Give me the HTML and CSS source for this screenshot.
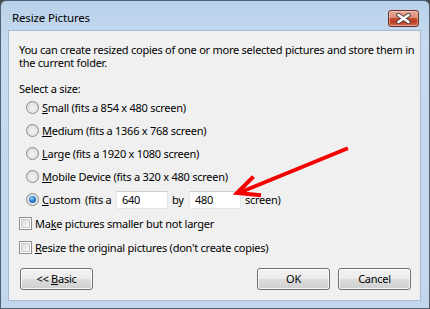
FILE: index.html
```html
<!DOCTYPE html>
<html>
<head>
<meta charset="utf-8">
<link rel="stylesheet" href="styles.css">
</head>
<body>
<div class="window">
  <div class="titlebar">
    <span class="title">Resize Pictures</span>
    <div class="close">
      <svg width="15" height="11" viewBox="0 0 15 11">
        <path d="M2.5 2 L12.5 9 M12.5 2 L2.5 9" stroke="#4e3a37" stroke-width="4.4" stroke-linecap="round" fill="none"/>
        <path d="M2.5 2 L12.5 9 M12.5 2 L2.5 9" stroke="#ffffff" stroke-width="2.6" stroke-linecap="round" fill="none"/>
      </svg>
    </div>
  </div>
  <div class="client">
    <p class="intro">You can create resized copies of one or more selected pictures and store them in</p>
    <p class="intro">the current folder.</p>
    <p class="section">Select a size:</p>
    <div class="radios">
      <div class="row"><span class="radio"></span><span><u>S</u>mall (fits a 854 x 480 screen)</span></div>
      <div class="row"><span class="radio"></span><span><u>M</u>edium (fits a 1366 x 768 screen)</span></div>
      <div class="row"><span class="radio"></span><span><u>L</u>arge (fits a 1920 x 1080 screen)</span></div>
      <div class="row"><span class="radio"></span><span><u>M</u>obile Device (fits a 320 x 480 screen)</span></div>
      <div class="row"><span class="radio checked"></span><span class="custom-label"><u>C</u>ustom</span><span class="fits">(fits a</span><span class="field">640</span><span class="by">by</span><span class="field">480</span><span class="screen">screen)</span></div>
    </div>
    <div class="checks">
      <div class="crow"><span class="check"></span><span>Ma<u>k</u>e pictures smaller but not larger</span></div>
      <div class="crow"><span class="check"></span><span><u>R</u>esize the original pictures (don't create copies)</span></div>
    </div>
    <div class="buttons">
      <div class="btn"><span>&lt;&lt; <u>B</u>asic</span></div>
      <div class="right">
        <div class="btn"><span>OK</span></div>
        <div class="btn"><span>Cancel</span></div>
      </div>
    </div>
  </div>
  <svg class="arrow" width="430" height="309" viewBox="0 0 430 309">
    <g stroke="#f40000" stroke-width="4" fill="none" stroke-linecap="square" stroke-linejoin="miter">
      <path d="M346 149 L241 192"/>
      <path d="M252 178 L237 193 L259 195"/>
    </g>
  </svg>
</div>
</body>
</html>
```
FILE: styles.css
```css
* { box-sizing: border-box; }
html, body { margin: 0; padding: 0; }
body {
  background: #4a4a4a;
  font-family: "Noto Sans", "Open Sans", sans-serif;
  font-size: 11px;
  color: #000;
}
.window {
  position: relative;
  width: 430px;
  height: 309px;
  border: 1px solid #54606e;
  border-radius: 6px 6px 0 0;
  background: linear-gradient(#b9d1ea 0px, #c6daf0 40px, #c2d7ee 100%);
  display: flex;
  flex-direction: column;
  overflow: hidden;
}
.titlebar {
  height: 29px;
  flex: none;
  display: flex;
  align-items: flex-start;
  justify-content: space-between;
  padding: 0 10px 0 11px;
}
.title {
  margin-top: 9px;
  line-height: 16px;
  font-size: 11.5px;
  letter-spacing: -0.15px;
}
.close {
  margin-top: 9px;
  width: 31px;
  height: 17px;
  border: 1px solid #6e3126;
  border-radius: 3px;
  background: linear-gradient(#e9a99b 0%, #d98a76 45%, #c24a2e 50%, #c13e22 75%, #d4765a 100%);
  box-shadow: inset 0 0 0 1px rgba(255,255,255,0.35);
  display: flex;
  align-items: center;
  justify-content: center;
}
.client {
  margin-left: 7px;
  width: 413px;
  height: 271px;
  flex: none;
  background: #f0f0f0;
  border: 1px solid #a6b9d0;
  padding: 12px 9px 0 10px;
  letter-spacing: -0.25px;
}
p { margin: 0; white-space: nowrap; }
.intro { line-height: 13px; height: 13px; }
.section { margin-top: 13px; line-height: 13px; }
.radios { margin-top: 1px; }
.row {
  height: 23px;
  display: flex;
  align-items: center;
  padding-left: 7px;
  white-space: nowrap;
}
.radio {
  width: 13px;
  height: 13px;
  border-radius: 50%;
  border: 1px solid #8a8a8a;
  background: radial-gradient(circle at 50% 60%, #f4f4f4 0%, #e4e4e4 55%, #d2d2d2 100%);
  margin-right: 3px;
  flex: none;
  display: flex;
  align-items: center;
  justify-content: center;
}
.radio.checked::after {
  content: "";
  width: 7px;
  height: 7px;
  border-radius: 50%;
  background: radial-gradient(circle at 40% 35%, #9fd6f7 0%, #2d80cf 45%, #0d3f82 100%);
}
.custom-label { width: 43px; flex: none; }
.fits { width: 31px; flex: none; }
.field {
  width: 52px;
  height: 18px;
  flex: none;
  background: #fff;
  border: 1px solid #e2e6ea;
  border-top-color: #cbd0d6;
  padding-left: 5px;
  line-height: 16px;
}
.by { width: 21px; flex: none; padding-left: 4px; }
.screen { padding-left: 4px; }
.crow {
  height: 24px;
  display: flex;
  align-items: center;
  white-space: nowrap;
}
.check {
  width: 13px;
  height: 13px;
  border: 1px solid #8f8f8f;
  background: #fff;
  margin-right: 3px;
  flex: none;
  display: flex;
  padding: 1px;
}
.check::after {
  content: "";
  flex: 1;
  border: 1px solid #c8c8c8;
  background: linear-gradient(135deg, #dcdcdc, #f5f5f5);
}
.buttons {
  margin-top: 9px;
  display: flex;
  justify-content: space-between;
  padding-left: 1px;
}
.right { display: flex; gap: 8px; }
.btn {
  width: 73px;
  height: 22px;
  border: 1px solid #707070;
  border-radius: 3px;
  background: linear-gradient(#f2f2f2 0%, #ebebeb 50%, #dddddd 50%, #cfcfcf 100%);
  box-shadow: inset 0 0 0 1px rgba(255,255,255,0.8);
  display: flex;
  align-items: center;
  justify-content: center;
  line-height: 14px;
  white-space: pre;
}
.arrow {
  position: absolute;
  left: -1px;
  top: -1px;
  pointer-events: none;
}
```
